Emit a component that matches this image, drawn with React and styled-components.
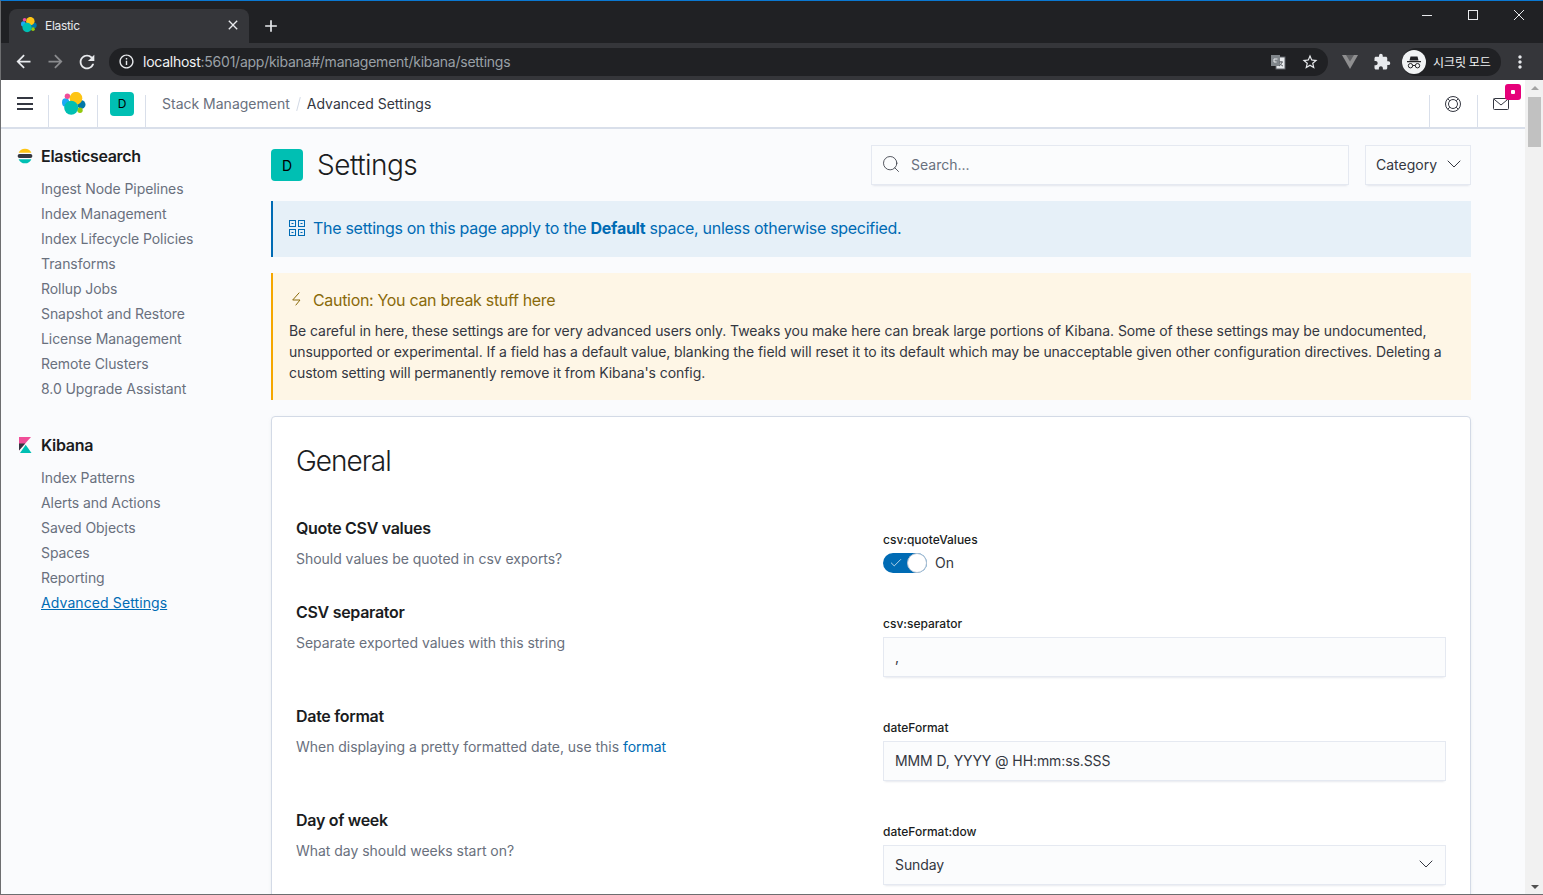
import React from 'react';
import styled, { createGlobalStyle } from 'styled-components';
import { MdArrowBack, MdArrowForward, MdRefresh, MdInfoOutline, MdStarBorder, MdExtension, MdMoreVert, MdClose, MdAdd } from 'react-icons/md';
import { Search, ChevronDown, Check } from 'lucide-react';

const Global = createGlobalStyle`
  html, body { margin: 0; padding: 0; height: 100%; overflow: hidden; background: #fafbfd; }
  * { box-sizing: border-box; }
  body { font-family: Inter, "Noto Sans", "Noto Sans CJK KR", sans-serif; font-size: 14px; color: #343741; }
`;

const Window = styled.div`
  width: 1543px; height: 895px; overflow: hidden; display: flex; flex-direction: column;
  border-top: 1px solid #0a78d2; border-left: 1px solid #6d6e70; border-bottom: 1px solid #6d6e70;
`;
const TabStrip = styled.div`
  height: 42px; flex: none; background: #202124; display: flex; align-items: flex-start; padding: 8px 1px 0 8px;
`;
const Tab = styled.div`
  width: 240px; height: 34px; background: #35363a; border-radius: 8px 8px 0 0; display: flex; align-items: center;
  padding: 0 8px 2px 12px; color: #e8eaed; font-size: 12px; letter-spacing: -0.3px; gap: 8px;
`;
const TabTitle = styled.span` flex: 1; `;
const CloseTab = styled.span` display: flex; color: #e8eaed; `;
const NewTab = styled.span` display: flex; color: #e8eaed; margin: 7px 0 0 12px; `;
const WindowControls = styled.div` display: flex; margin-left: auto; margin-top: -8px; `;
const WinBtn = styled.div` width: 46px; height: 28px; display: flex; align-items: center; justify-content: center; color: #e8eaed; `;
const Toolbar = styled.div`
  height: 37px; flex: none; background: #35363a; display: flex; align-items: center; padding-left: 6px;
`;
const NavBtn = styled.div`
  width: 32px; height: 32px; display: flex; align-items: center; justify-content: center; flex: none;
  color: ${p => (p.$dim ? '#8a8b8e' : '#e8eaed')};
`;
const Omnibox = styled.div`
  width: 1219px; height: 28px; margin: 0 6px; background: #202124; border-radius: 14px; display: flex; align-items: center;
  padding: 0 2px 0 1px; flex: none;
`;
const OmniIcon = styled.div` width: 32px; height: 28px; display: flex; align-items: center; justify-content: center; color: #e8eaed; flex: none; `;
const Url = styled.div` flex: 1; padding-left: 1px; font-size: 14px; letter-spacing: -0.25px; color: #9aa0a6; white-space: nowrap; `;
const Host = styled.span` color: #f1f3f4; `;
const Pill = styled.div`
  width: 99px; height: 28px; margin-left: 4px; border-radius: 14px; background: #202124; display: flex; align-items: center;
  padding-left: 0; gap: 7px; color: #f1f3f4; font-size: 12px; flex: none; font-family: "Noto Sans CJK KR", sans-serif;
`;
const Dots = styled(NavBtn)` margin-left: 3px; `;

const Viewport = styled.div` flex: 1; min-height: 0; display: flex; `;
const App_ = styled.div` flex: 1; min-width: 0; display: flex; flex-direction: column; `;
const Scrollbar = styled.div`
  width: 18px; flex: none; background: #f1f1f1; display: flex; flex-direction: column; align-items: center; padding-top: 6px;
`;
const ArrowUp = styled.div` width: 0; height: 0; border: 4px solid transparent; border-top: 0; border-bottom: 4px solid #a3a3a3; margin-left: 1px; `;
const ArrowDown = styled.div` width: 0; height: 0; border: 4px solid transparent; border-bottom: 0; border-top: 4px solid #505050; margin: auto 0 5px 1px; `;
const Thumb = styled.div` width: 13px; height: 50px; background: #c1c1c1; margin: 7px 0 0 1px; `;

const Header = styled.header`
  height: 49px; flex: none; background: #fff; border-bottom: 2px solid #d9dfea; display: flex; align-items: stretch;
`;
const Seg = styled.div`
  width: ${p => p.$w}px; flex: none; display: flex; align-items: center; justify-content: center; position: relative;
  background: linear-gradient(#d9dfea, #d9dfea) right bottom / 1px 32px no-repeat;
`;
const SegLeft = styled(Seg)`
  background: linear-gradient(#d9dfea, #d9dfea) left bottom / 1px 32px no-repeat;
`;
const Burger = styled.div` display: flex; flex-direction: column; gap: 3.5px; `;
const BurgerBar = styled.span` display: block; width: 16px; height: 2px; background: #343741; `;
const Avatar = styled.div`
  width: ${p => p.$s}px; height: ${p => p.$s}px; background: #00bfb3; border-radius: 4px; display: flex; align-items: center; justify-content: center;
  color: #000; font-size: ${p => p.$f}px; flex: none;
`;
const Crumbs = styled.nav` flex: 1; display: flex; align-items: center; padding-left: 16px; font-size: 14px; color: #69707d; `;
const CrumbSep = styled.span`
  display: inline-block; width: 1px; height: 14px; background: #d3dae6; transform: rotate(15deg); margin: 0 8px;
`;
const CrumbNow = styled.span` color: #343741; `;
const Badge = styled.div`
  position: absolute; top: 4px; right: 4px; width: 16px; height: 16px; background: #e6007a; border-radius: 3px;
  display: flex; align-items: center; justify-content: center;
`;
const BadgeDot = styled.span` width: 4px; height: 4px; background: #fff; border-radius: 1px; `;

const Body = styled.div` flex: 1; min-height: 0; display: flex; background: #fafbfd; overflow: hidden; `;
const Side = styled.aside` width: 270px; flex: none; padding: 15px 0 0 16px; `;
const Group = styled.section` margin-bottom: 32px; `;
const GroupHead = styled.div`
  height: 24px; display: flex; align-items: center; gap: 8px; font-size: 16px; font-weight: 600; letter-spacing: -0.3px; color: #1a1c21; line-height: 24px;
`;
const GroupList = styled.ul` list-style: none; margin: 8px 0 0; padding: 0 0 0 24px; `;
const SideItem = styled.li`
  height: 25px; line-height: 25px; font-size: 14px; color: ${p => (p.$active ? '#006bb4' : '#69707d')};
  letter-spacing: ${p => (p.$active ? '0.1px' : '-0.07px')};
  text-decoration: ${p => (p.$active ? 'underline' : 'none')};
`;

const Main = styled.main` width: 1200px; flex: none; padding-top: 16px; `;
const TopRow = styled.div` height: 40px; display: flex; align-items: center; margin-bottom: 16px; `;
const Title = styled.h1` margin: 0 0 0 14px; font-size: 28px; font-weight: 300; letter-spacing: -0.5px; color: #1a1c21; line-height: 40px; `;
const SearchBox = styled.div`
  width: 478px; height: 40px; margin-left: auto; display: flex; align-items: center; gap: 10px; padding: 0 0 2px 9px;
  background: #fbfcfd; border: 1px solid #e5e9f1; color: #69707d; box-shadow: 0 1px 1px -1px rgba(152,162,179,.2), 0 3px 2px -2px rgba(152,162,179,.2);
`;
const CategoryBtn = styled.div`
  width: 106px; height: 40px; margin-left: 16px; display: flex; align-items: center; justify-content: space-between; padding: 0 4px 2px 10px;
  background: #fbfcfd; border: 1px solid #e5e9f1; color: #343741; box-shadow: 0 1px 1px -1px rgba(152,162,179,.2), 0 3px 2px -2px rgba(152,162,179,.2);
`;
const InfoCallout = styled.div`
  height: 56px; background: #e6f0f8; border-left: 2px solid #006bb4; display: flex; align-items: center; gap: 8px; padding: 0 0 2px 16px;
  font-size: 16px; letter-spacing: -0.29px; color: #006bb4; margin-bottom: 16px;
`;
const Warn = styled.div`
  height: 127px; background: #fef6e6; border-left: 2px solid #f5a700; padding: 15px 16px 0; margin-bottom: 16px;
`;
const WarnTitle = styled.div` height: 24px; display: flex; align-items: center; gap: 8px; font-size: 16px; letter-spacing: -0.32px; color: #8a6a0a; margin-bottom: 8px; `;
const WarnBody = styled.p` margin: 0; font-size: 14px; line-height: 21px; letter-spacing: -0.075px; color: #343741; `;
const Card = styled.section`
  background: #fff; border: 1px solid #d3dae6; border-radius: 4px; padding: 24px; height: 520px;
  box-shadow: 0 2px 2px -1px rgba(152,162,179,.3), 0 1px 5px -2px rgba(152,162,179,.3);
`;
const CardTitle = styled.h2` margin: 0 0 35px; font-size: 28px; font-weight: 300; letter-spacing: -1px; line-height: 40px; color: #1a1c21; `;
const Row = styled.div` display: grid; grid-template-columns: 1fr 563px; padding-bottom: 27px; `;
const RowTitle = styled.h3` margin: 0 0 8px; font-size: 16px; font-weight: 600; letter-spacing: -0.3px; line-height: 24px; color: #1a1c21; `;
const RowDesc = styled.p` margin: 0; font-size: 14px; line-height: 21px; letter-spacing: -0.03px; color: #69707d; `;
const Link_ = styled.a` color: #006bb4; `;
const Field = styled.div` padding-top: 15px; `;
const Label = styled.div` font-size: 12px; font-weight: 500; line-height: 18px; color: #1a1c21; margin-bottom: 4px; `;
const Input = styled.div`
  height: 40px; display: flex; align-items: center; justify-content: space-between; padding: 0 7px 2px 11px;
  background: #fbfcfd; border: 1px solid #e5e9f1; font-size: 14px; letter-spacing: -0.1px; color: #343741;
  box-shadow: 0 1px 1px -1px rgba(152,162,179,.2), 0 3px 2px -2px rgba(152,162,179,.2);
`;
const ToggleRow = styled.div` display: flex; align-items: center; gap: 8px; height: 20px; font-size: 14px; color: #343741; `;
const ToggleText = styled.span` padding-bottom: 2px; `;
const Toggle = styled.div`
  width: 44px; height: 20px; border-radius: 10px; background: #006bb4; display: flex; align-items: center; justify-content: space-between;
  padding-left: 6px; color: #fff;
`;
const Knob = styled.span` width: 20px; height: 20px; border-radius: 50%; background: #fff; border: 1px solid #b5c3d3; `;

const ElasticLogo = ({ size }) => (
  <svg width={size} height={size} viewBox="0 0 24 24">
    <ellipse cx="3.6" cy="10.5" rx="3.6" ry="4.2" fill="#1ba9f5" />
    <circle cx="5.4" cy="4.2" r="2.7" fill="#f04e98" />
    <ellipse cx="19.4" cy="12.500" rx="4.100" ry="4.300" fill="#0077a8" />
    <circle cx="18" cy="18.200" r="2.700" fill="#93c90e" />
    <circle cx="14" cy="6.200" r="6.300" fill="#fec514" />
    <circle cx="9.200" cy="15.700" r="7" fill="#00bfb3" />
  </svg>
);
const EsLogo = () => (
  <svg width="16" height="16" viewBox="0 0 16 16">
    <path d="M1.600 4.800A7 7 0 0 1 14.400 4.800Z" fill="#fec514" />
    <rect x="0.600" y="6" width="14.800" height="4" rx="2" fill="#343741" />
    <path d="M1.600 11.200A7 7 0 0 0 14.400 11.200Z" fill="#00bfb3" />
  </svg>
);
const KibanaLogo = () => (
  <svg width="16" height="16" viewBox="0 0 16 16">
    <path d="M2 0H14L2 13.500Z" fill="#f04e98" />
    <path d="M2 6.500 8.200 6.600 2 13.500Z" fill="#343741" />
    <path d="M3 16H14.500L8.700 7.700Z" fill="#00bfb3" />
  </svg>
);
const SpacesIcon = () => (
  <svg width="16" height="16" viewBox="0 0 16 16" fill="none" stroke="#006bb4">
    <rect x=".5" y=".5" width="6" height="6" />
    <path d="M2.500 3.500h2" />
    <rect x="9.500" y=".5" width="6" height="6" />
    <path d="M11.500 3.500h2" />
    <rect x=".5" y="9.500" width="6" height="6" />
    <path d="M2.500 12.500h2" />
    <rect x="9.500" y="9.500" width="6" height="6" />
    <path d="M11.500 12.500h2" />
  </svg>
);
const BoltIcon = () => (
  <svg width="16" height="16" viewBox="0 0 16 16" fill="none" stroke="#8a6a0a">
    <path d="M10.300 .6 3.700 8H11L6.700 13.300" />
  </svg>
);
const MailIcon = () => (
  <svg width="16" height="12" viewBox="0 0 16 12" fill="none" stroke="#343741">
    <rect x=".5" y=".5" width="15" height="11" rx="1" />
    <path d="M.8 1 8 7l7.200-6" />
  </svg>
);
const BuoyIcon = () => (
  <svg width="16" height="16" viewBox="0 0 16 16" fill="none" stroke="#343741">
    <circle cx="8" cy="8" r="7.500" />
    <circle cx="8" cy="8" r="4.500" />
    <path d="M2.700 2.700 4.800 4.800M13.300 2.700 11.200 4.800M2.700 13.300 4.800 11.200M13.300 13.300 11.200 11.200" />
  </svg>
);
const TranslateIcon = () => (
  <svg width="16" height="16" viewBox="0 0 16 16">
    <rect x="6" y="3" width="9" height="12" fill="#e8eaed" stroke="#5f6368" />
    <rect x="1" y="1" width="9" height="11" fill="#80868b" />
    <path d="M7.500 5H4v3h2.600" fill="none" stroke="#e8eaed" />
    <path d="M9 8h4M11 7v1M12 8c-.4 2-1.500 3-3 4M10 9.500c.5 1 1.500 2 3 2.500" fill="none" stroke="#5f6368" />
  </svg>
);
const VueIcon = () => (
  <svg width="16" height="14" viewBox="0 0 16 14">
    <path d="M0 0H16L8 14Z" fill="#8f8f90" />
    <path d="M4 0H12L8 6.500Z" fill="#5f6063" />
  </svg>
);
const IncognitoIcon = () => (
  <svg width="24" height="24" viewBox="0 0 24 24">
    <circle cx="12" cy="12" r="12" fill="#f1f3f4" />
    <path d="M8.500 6.500h7l1 4h-9zM5 11h14v1.200H5z" fill="#202124" />
    <circle cx="8.500" cy="15.700" r="2.200" fill="none" stroke="#202124" />
    <circle cx="15.500" cy="15.700" r="2.200" fill="none" stroke="#202124" />
    <path d="M10.700 15.500h2.600" stroke="#202124" />
  </svg>
);
const Minimize = () => (<svg width="10" height="10" viewBox="0 0 10 10"><path d="M0 5.500h10" stroke="#e8eaed" /></svg>);
const Maximize = () => (<svg width="10" height="10" viewBox="0 0 10 10"><rect x=".5" y=".5" width="9" height="9" fill="none" stroke="#e8eaed" /></svg>);
const CloseWin = () => (<svg width="10" height="10" viewBox="0 0 10 10"><path d="M0 0l10 10M10 0L0 10" stroke="#e8eaed" /></svg>);

const es = ['Ingest Node Pipelines', 'Index Management', 'Index Lifecycle Policies', 'Transforms', 'Rollup Jobs', 'Snapshot and Restore', 'License Management', 'Remote Clusters', '8.0 Upgrade Assistant'];
const kb = ['Index Patterns', 'Alerts and Actions', 'Saved Objects', 'Spaces', 'Reporting', 'Advanced Settings'];

export default function App() {
  return (
    <>
      <Global />
      <Window>
        <TabStrip>
          <Tab>
            <ElasticLogo size={16} />
            <TabTitle>Elastic</TabTitle>
            <CloseTab><MdClose size={16} /></CloseTab>
          </Tab>
          <NewTab><MdAdd size={20} /></NewTab>
          <WindowControls>
            <WinBtn><Minimize /></WinBtn>
            <WinBtn><Maximize /></WinBtn>
            <WinBtn><CloseWin /></WinBtn>
          </WindowControls>
        </TabStrip>
        <Toolbar>
          <NavBtn><MdArrowBack size={21} /></NavBtn>
          <NavBtn $dim><MdArrowForward size={21} /></NavBtn>
          <NavBtn><MdRefresh size={22} /></NavBtn>
          <Omnibox>
            <OmniIcon><MdInfoOutline size={17} /></OmniIcon>
            <Url><Host>localhost</Host>:5601/app/kibana#/management/kibana/settings</Url>
            <OmniIcon><TranslateIcon /></OmniIcon>
            <OmniIcon><MdStarBorder size={18} /></OmniIcon>
          </Omnibox>
          <NavBtn><VueIcon /></NavBtn>
          <NavBtn><MdExtension size={18} /></NavBtn>
          <Pill><IncognitoIcon /><span>시크릿 모드</span></Pill>
          <Dots><MdMoreVert size={20} /></Dots>
        </Toolbar>
        <Viewport>
          <App_>
            <Header>
              <Seg $w={48}><Burger><BurgerBar /><BurgerBar /><BurgerBar /></Burger></Seg>
              <Seg $w={49}><ElasticLogo size={24} /></Seg>
              <Seg $w={48}><Avatar $s={24} $f={12}>D</Avatar></Seg>
              <Crumbs>Stack Management<CrumbSep /><CrumbNow>Advanced Settings</CrumbNow></Crumbs>
              <SegLeft $w={48}><BuoyIcon /></SegLeft>
              <SegLeft $w={48}>
                <MailIcon />
                <Badge><BadgeDot /></Badge>
              </SegLeft>
            </Header>
            <Body>
              <Side>
                <Group>
                  <GroupHead><EsLogo />Elasticsearch</GroupHead>
                  <GroupList>{es.map(t => <SideItem key={t}>{t}</SideItem>)}</GroupList>
                </Group>
                <Group>
                  <GroupHead><KibanaLogo />Kibana</GroupHead>
                  <GroupList>{kb.map(t => <SideItem key={t} $active={t === 'Advanced Settings'}>{t}</SideItem>)}</GroupList>
                </Group>
              </Side>
              <Main>
                <TopRow>
                  <Avatar $s={32} $f={14}>D</Avatar>
                  <Title>Settings</Title>
                  <SearchBox><Search size={20} strokeWidth={1} color="#343741" />Search...</SearchBox>
                  <CategoryBtn>Category<ChevronDown size={24} strokeWidth={1} /></CategoryBtn>
                </TopRow>
                <InfoCallout>
                  <SpacesIcon />
                  <span>The settings on this page apply to the <b>Default</b> space, unless otherwise specified.</span>
                </InfoCallout>
                <Warn>
                  <WarnTitle><BoltIcon />Caution: You can break stuff here</WarnTitle>
                  <WarnBody>
                    Be careful in here, these settings are for very advanced users only. Tweaks you make here can break large portions of Kibana. Some of these settings may be undocumented, unsupported or experimental. If a field has a default value, blanking the field will reset it to its default which may be unacceptable given other configuration directives. Deleting a custom setting will permanently remove it from Kibana's config.
                  </WarnBody>
                </Warn>
                <Card>
                  <CardTitle>General</CardTitle>
                  <Row>
                    <div>
                      <RowTitle>Quote CSV values</RowTitle>
                      <RowDesc>Should values be quoted in csv exports?</RowDesc>
                    </div>
                    <Field>
                      <Label>csv:quoteValues</Label>
                      <ToggleRow>
                        <Toggle><Check size={14} strokeWidth={1.2} /><Knob /></Toggle>
                        <ToggleText>On</ToggleText>
                      </ToggleRow>
                    </Field>
                  </Row>
                  <Row>
                    <div>
                      <RowTitle>CSV separator</RowTitle>
                      <RowDesc>Separate exported values with this string</RowDesc>
                    </div>
                    <Field>
                      <Label>csv:separator</Label>
                      <Input>,</Input>
                    </Field>
                  </Row>
                  <Row>
                    <div>
                      <RowTitle>Date format</RowTitle>
                      <RowDesc>When displaying a pretty formatted date, use this <Link_>format</Link_></RowDesc>
                    </div>
                    <Field>
                      <Label>dateFormat</Label>
                      <Input>MMM D, YYYY @ HH:mm:ss.SSS</Input>
                    </Field>
                  </Row>
                  <Row>
                    <div>
                      <RowTitle>Day of week</RowTitle>
                      <RowDesc>What day should weeks start on?</RowDesc>
                    </div>
                    <Field>
                      <Label>dateFormat:dow</Label>
                      <Input>Sunday<ChevronDown size={24} strokeWidth={1} /></Input>
                    </Field>
                  </Row>
                </Card>
              </Main>
            </Body>
          </App_>
          <Scrollbar>
            <ArrowUp />
            <Thumb />
            <ArrowDown />
          </Scrollbar>
        </Viewport>
      </Window>
    </>
  );
}
